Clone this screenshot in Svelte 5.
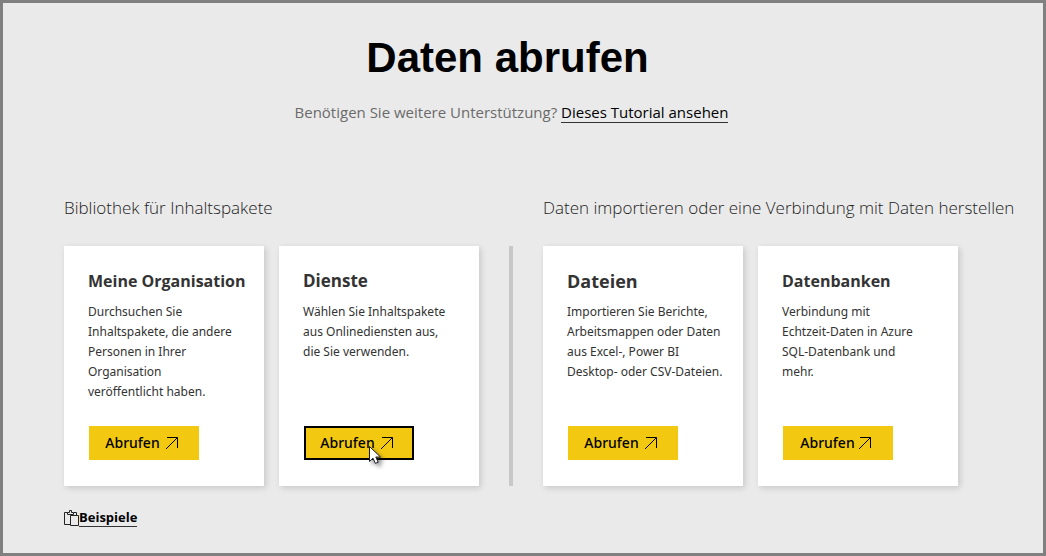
<script>
  const groups = [
    {
      title: 'Bibliothek für Inhaltspakete',
      cards: [
        {
          title: 'Meine Organisation',
          size: 'small',
          text: 'Durchsuchen Sie\nInhaltspakete, die andere\nPersonen in Ihrer\nOrganisation\nveröffentlicht haben.'
        },
        {
          title: 'Dienste',
          size: 'medium',
          active: true,
          text: 'Wählen Sie Inhaltspakete\naus Onlinediensten aus,\ndie Sie verwenden.'
        }
      ]
    },
    {
      title: 'Daten importieren oder eine Verbindung mit Daten herstellen',
      cards: [
        {
          title: 'Dateien',
          size: 'large',
          text: 'Importieren Sie Berichte,\nArbeitsmappen oder Daten\naus Excel-, Power BI\nDesktop- oder CSV-Dateien.'
        },
        {
          title: 'Datenbanken',
          size: 'small',
          tight: true,
          text: 'Verbindung mit\nEchtzeit-Daten in Azure\nSQL-Datenbank und\nmehr.'
        }
      ]
    }
  ];
</script>

<main class="page">
  <header>
    <h1>Daten abrufen</h1>
    <p class="help">Benötigen Sie weitere Unterstützung? <a href="#tutorial">Dieses Tutorial ansehen</a></p>
  </header>

  <div class="groups">
    {#each groups as group, i}
      {#if i > 0}<div class="divider"></div>{/if}
      <section>
        <h2>{group.title}</h2>
        <div class="cards">
          {#each group.cards as card}
            <article class="card">
              <h3 class={card.size}>{card.title}</h3>
              <p>{card.text}</p>
              <button type="button" class:active={card.active} class:tight={card.tight}>
                <span>Abrufen</span>
                <svg class="arrow" width="14" height="14" viewBox="0 0 14 14" aria-hidden="true">
                  <path d="M2 1.5H12.5V12M12.5 1.5L1 13" fill="none" stroke="#000" stroke-width="1" />
                </svg>
                {#if card.active}
                  <svg class="cursor" width="20" height="26" viewBox="0 0 20 26" aria-hidden="true">
                    <path d="M1.5 1.5V16.5L5 13.2L7.4 18.4L10.2 17.2L7.8 12H12.5Z" fill="#fff" stroke="#1b1b2b" stroke-width="1" />
                  </svg>
                {/if}
              </button>
            </article>
          {/each}
        </div>
      </section>
    {/each}
  </div>

  <a class="samples" href="#beispiele">
    <svg width="15" height="16" viewBox="0 0 15 16" aria-hidden="true">
      <path d="M6 14.5H.5V2.5H3.5M9.5 2.5H12.5V5M3.5 4.5V2.5H5.5V.5H7.5V2.5H9.5V4.5ZM6.5 5.5H14.5V15.5H6.5Z" fill="none" stroke="#222" stroke-width="1" />
    </svg>
    <span>Beispiele</span>
  </a>
</main>

<style>
  :global(body) {
    margin: 0;
    background: #eaeaea;
  }
  .page {
    box-sizing: border-box;
    min-height: 100vh;
    padding: 29px 24px 16px 61px;
    border: 3px solid #808080;
    background: #eaeaea;
    color: #333;
    font-family: "Open Sans", "Noto Sans", sans-serif;
  }
  h1, h2, h3, p {
    margin: 0;
  }
  header {
    display: flex;
    flex-direction: column;
    align-items: center;
    padding-right: 60px;
    text-align: center;
  }
  h1 {
    padding-right: 8px;
    color: #000;
    font: 700 42px/52px "Liberation Sans", Arial, sans-serif;
  }
  .help {
    margin-top: 16px;
    color: #6b6b6b;
    font-size: 15px;
    line-height: 24px;
  }
  .help a {
    color: #000;
    text-decoration: none;
    border-bottom: 1px solid #333;
  }
  .groups {
    display: grid;
    grid-template-columns: minmax(0, 415px) 4px minmax(0, 1fr);
    gap: 30px;
    margin-top: 71px;
  }
  .divider {
    margin-top: 51px;
    background: #c8c8c8;
  }
  h2 {
    margin-bottom: 26px;
    color: #222;
    font-size: 17px;
    font-weight: 300;
    line-height: 25px;
    white-space: nowrap;
  }
  .cards {
    display: flex;
    gap: 15px;
  }
  .card {
    box-sizing: border-box;
    display: flex;
    flex: 0 1 200px;
    flex-direction: column;
    align-items: flex-start;
    min-height: 240px;
    padding: 21px 0 26px 24px;
    background: #fff;
    box-shadow: 2px 2px 6px rgba(0, 0, 0, 0.15);
  }
  h3 {
    font-weight: 700;
    line-height: 28px;
    white-space: nowrap;
  }
  .small {
    font-size: 16px;
  }
  .medium {
    font-size: 17px;
  }
  .large {
    font-size: 18px;
  }
  .card p {
    margin-top: 7px;
    font-family: "Noto Sans", "Open Sans", sans-serif;
    font-size: 12px;
    line-height: 20px;
    white-space: pre;
  }
  button {
    position: relative;
    box-sizing: border-box;
    display: flex;
    align-items: center;
    justify-content: center;
    gap: 5px;
    width: 110px;
    height: 34px;
    margin: auto 0 0 1px;
    padding: 0 4px 0 0;
    border: 0;
    background: #f2c811;
    color: #000;
    font: 500 14px/20px "Noto Sans", "Open Sans", sans-serif;
  }
  .active {
    border: 2px solid #000;
  }
  .tight {
    gap: 3px;
  }
  .cursor {
    position: absolute;
    top: 17px;
    left: 62px;
    overflow: visible;
    filter: drop-shadow(3px 3px 2px rgba(0, 0, 0, 0.45));
  }
  .samples {
    display: inline-flex;
    align-items: center;
    margin-top: 22px;
    color: #000;
    font-size: 13px;
    font-weight: 700;
    line-height: 18px;
    text-decoration: none;
  }
  .samples span {
    border-bottom: 1px solid #333;
  }
</style>
